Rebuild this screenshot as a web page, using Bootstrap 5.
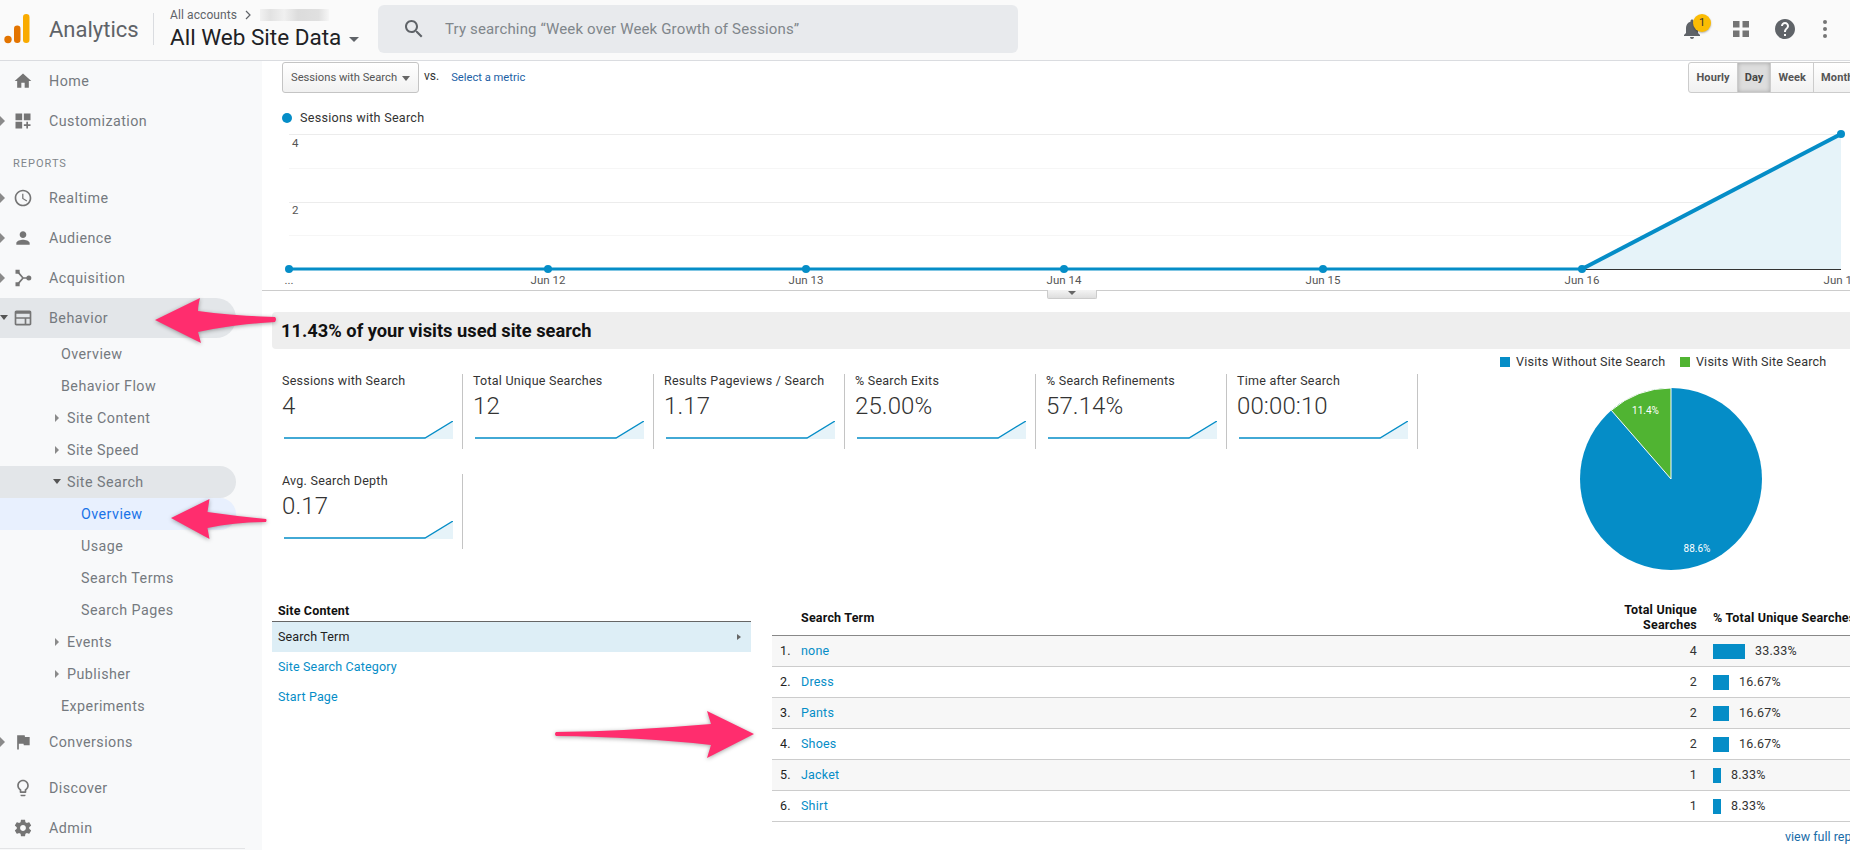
<!DOCTYPE html>
<html lang="en">
<head>
<meta charset="utf-8">
<title>Analytics</title>
<link href="https://cdn.jsdelivr.net/npm/bootstrap@5.3.0/dist/css/bootstrap.min.css" rel="stylesheet">
<style>
html,body{height:100%;overflow:hidden;background:#fff}
body{font-family:Roboto,"Liberation Sans",sans-serif;font-size:13px;color:#333}
.ga-app{position:relative;width:1850px;height:850px;overflow:hidden}
.ga-top{height:61px;background:#fafafa;border-bottom:1px solid #dadce0;padding-bottom:2px}
.ga-logo{margin-left:4px;flex:none}
.ga-brand{font-size:22px;color:#5f6368;margin-left:19px;width:90px}
.ga-vr{width:1px;height:32px;background:#dadce0;margin:0 16px 0 14px}
.ga-acct{width:208px;padding-top:2px}
.ga-crumb{font-size:12px;line-height:14px;color:#5f6368;height:15px;margin-top:-3px;letter-spacing:.1px}
.ga-blur{width:69px;height:12px;margin-left:8px;background:linear-gradient(90deg,#f1f1f1,#e2e2e2 15%,#f0f0f0 35%,#dcdcdc 55%,#e0e0e0 85%,#f6f6f6)}
.ga-view{font-size:22.5px;line-height:26px;color:#202124;margin-top:2px;white-space:nowrap}
.ga-caret{display:inline-block;width:0;height:0;border:5px solid transparent;border-top-color:#5f6368;border-bottom:0;margin-left:8px;vertical-align:middle}
.ga-search{width:640px;height:48px;background:#e8eaed;border-radius:6px;color:#80868b;font-size:15px;letter-spacing:.15px}
.ga-search svg{margin:0 19px 0 24px}
.ga-actions{margin-left:auto}
.ga-ico{fill:#5f6368;flex:none}
.ga-bell{width:24px;height:24px}
.ga-badge{position:absolute;right:-7px;top:-3px;width:18px;height:18px;border-radius:50%;background:#fbbc04;color:#333;font-size:11px;line-height:18px;text-align:center;box-shadow:0 1px 2px rgba(0,0,0,.3)}
.ga-grid{margin-left:29px;flex:none;fill:#757575}
.ga-help{margin-left:24px}
.ga-more{margin:0 22px 0 25px;fill:#757575}
.ga-side{width:262px;height:789px;background:#f8f9fa;flex:none;position:relative;font-size:14.3px;letter-spacing:.45px;color:#757a7f}
.ga-side::after{content:"";position:absolute;left:0;bottom:1px;width:245px;height:1px;background:#e3e4e6}
.ga-row{height:40px;padding:1px 0 0 49px;position:relative;display:flex;align-items:center;width:236px;border-radius:0 20px 20px 0}
.ga-row>svg{position:absolute;left:13px;top:10px;fill:#757575}
.ga-arrow{position:absolute;left:0;top:50%;margin-top:-5px;width:0;height:0;border:5px solid transparent;border-left-color:#8a8a8a;border-right:0}
.ga-sub{height:32px;display:flex;align-items:center;position:relative;width:236px;border-radius:0 16px 16px 0;padding:1px 0 0 61px}
.ga-sub.lv2{padding-left:67px}
.ga-sub.lv3{padding-left:81px}
.ga-sub .ga-arrow{left:55px;margin-top:-4px;border-width:4px;border-right:0}
.ga-row .ga-arrow.ga-down,.ga-sub .ga-arrow.ga-down{border:0;border-left:4px solid transparent;border-right:4px solid transparent;border-top:5px solid #555;margin-top:-3px}
.ga-sub .ga-arrow.ga-down{left:53px}
.ga-on{background:#e3e6e9}
.ga-sel{background:#e8f0fe;color:#1a73e8}
.ga-label{height:37px;padding:15px 0 0 13px;font-size:11px;letter-spacing:1px;line-height:16px;color:#80868b}
.ga-gap{height:6px}
.ga-main{width:1588px;height:789px;overflow:hidden;flex:none;position:relative}
.ga-tools{height:31px;padding:1px 0 0 20px;margin-right:-11.5px}
.ga-select.btn{width:137px;height:31px;padding:2px 8px 0;font-size:11.2px;color:#555;background:linear-gradient(#fff,#f1f1f1);border:1px solid #c4c4c4;border-radius:3px}
.ga-select i{width:0;height:0;border:4px solid transparent;border-top:5px solid #666;border-bottom:0}
.ga-vs{font-size:12px;color:#333;margin:-2px 12px 0 5px}
.ga-metric{font-size:11.2px;color:#1c5fa5;text-decoration:none;padding-top:2px}
.ga-time .btn{height:31px;padding:0 7px;font-size:11px;font-weight:700;color:#555;background:linear-gradient(#fff,#f1f1f1);border:1px solid #ccc;line-height:29px;letter-spacing:.1px;border-radius:3px}
.ga-time .btn.active{background:#ddd;box-shadow:inset 0 0 4px rgba(0,0,0,.25);color:#444;border-color:#ccc}
.ga-legend{height:24px;margin-top:14px;padding-left:20px;color:#333;font-size:12.6px;letter-spacing:.25px}
.ga-dot{width:10px;height:10px;border-radius:50%;background:#058dc7;margin-right:8px}
.ga-chart{display:block;margin-top:-2px;border-bottom:1px solid #ccc;font-family:Roboto,"Liberation Sans",sans-serif}
.ga-chartwrap{position:relative}
.ga-handle{position:absolute;left:785px;bottom:-8px;width:50px;height:9px;border:1px solid #ccc;border-top:0;background:linear-gradient(#f4f4f4,#dedede);border-radius:0 0 2px 2px}
.ga-handle i{position:absolute;left:20px;top:1px;width:0;height:0;border:4px solid transparent;border-top:4px solid #666;border-bottom:0}
.ga-head{height:37px;margin:21px 0 0 10px;padding-left:9px;background:#eee;border-radius:4px 0 0 4px;font-size:18.3px;font-weight:700;color:#111;line-height:38px}
.ga-stats{height:251px}
.ga-cells{width:1156px;flex:none;padding:25px 0 0 10px;align-content:flex-start;row-gap:25px}
.ga-cell{width:191px;height:75px;padding-left:10px;border-right:1px solid #c4c4c4;color:#333}
.ga-cell-t{font-size:12.5px;line-height:13px;letter-spacing:.25px;white-space:nowrap}
.ga-cell-v{font-size:24px;line-height:28px;font-weight:300;margin-top:5px;color:#333;letter-spacing:.1px}
.ga-cell svg{display:block;margin:1px 0 0 2px}
.ga-pie{padding:6px 0 0 82px;width:432px;flex:none}
.ga-pl{font-size:12.6px;line-height:13px;letter-spacing:.2px;color:#333;white-space:nowrap}
.ga-sw{width:10px;height:10px;margin-right:6px;flex:none}
.ga-sw-a{background:#058dc7}
.ga-sw-b{background:#50b432;margin-left:14.5px}
.ga-piesvg{display:block;margin:19px 0 0 79px;font-family:Roboto,"Liberation Sans",sans-serif}
.ga-tables{padding-left:10px}
.ga-left{width:479px;margin-right:21px;padding-top:2px;flex:none;font-size:12.5px;letter-spacing:.15px}
.ga-left-h{height:20px;line-height:17px;padding-left:6px;font-weight:700;color:#111;border-bottom:1px solid #666}
.ga-left-a{height:30px;background:#ddeef6;padding:0 10px 0 6px;color:#222}
.ga-left-a i{width:0;height:0;border:3.5px solid transparent;border-left:4px solid #666;border-right:0}
.ga-left a{display:block;text-decoration:none;color:#058dc7;padding-left:6px;height:30px;line-height:30px}
.ga-right{width:1078px;flex:none;overflow:hidden;font-size:12.5px;letter-spacing:.2px}
.ga-tbl.table{table-layout:fixed;margin:0;width:1078px;--bs-table-bg:transparent;--bs-table-color:#333}
.ga-tbl th{height:35px;padding:0;border-bottom:1px solid #888;font-weight:700;color:#111;line-height:15px;vertical-align:middle;background:none}
.ga-tbl td{height:31px;padding:1px 0 0;border-bottom:1px solid #ccc;vertical-align:middle}
.ga-tbl tbody tr:nth-child(odd) td{background:#f7f7f7}
.ga-tbl a{color:#058dc7;text-decoration:none}
.ga-c1{width:29px}
.ga-c3{width:100px}
.ga-c4{width:153px}
.ga-n{padding-left:8px!important;color:#222}
.ga-r{text-align:right}
.ga-tbl th.ga-p,.ga-tbl td.ga-p{padding-left:16px;white-space:nowrap;letter-spacing:.2px}
.ga-bar{display:inline-block;height:15px;background:#058dc7;margin-right:10px;vertical-align:middle}
.ga-b1{width:32px}.ga-b2{width:16px}.ga-b3{width:8px}
.ga-full{margin:7px 0 0 1013px;white-space:nowrap;line-height:16px;font-size:12.5px;letter-spacing:0}
.ga-full a{color:#1a6ca8;text-decoration:none}
.ga-arrows{position:absolute;left:0;top:0;pointer-events:none}
.ga-arrows path{fill:#ff2d6e;filter:drop-shadow(0 1px 2px rgba(0,0,0,.35))}
</style>
</head>
<body>
<div class="ga-app">
  <header class="ga-top d-flex align-items-center">
    <svg class="ga-logo" width="26" height="58" viewBox="4 0 26 58"><circle cx="8" cy="39.5" r="3.7" fill="#e37400"/><rect x="14" y="25.5" width="6.5" height="17.5" rx="3.2" fill="#e37400"/><rect x="23" y="14" width="6.5" height="29" rx="3.2" fill="#f9ab00"/></svg>
    <div class="ga-brand">Analytics</div>
    <div class="ga-vr"></div>
    <div class="ga-acct">
      <div class="ga-crumb d-flex align-items-center">All accounts&nbsp;
        <svg width="8" height="12" viewBox="0 0 8 12" class="ms-1"><path d="M2 2l4 4-4 4" fill="none" stroke="#5f6368" stroke-width="1.2"/></svg>
        <span class="ga-blur"></span></div>
      <div class="ga-view">All Web Site Data<span class="ga-caret"></span></div>
    </div>
    <div class="ga-search d-flex align-items-center">
      <svg width="24" height="24" viewBox="0 0 24 24" class="ga-ico"><path d="M15.5 14h-.79l-.28-.27C15.41 12.59 16 11.11 16 9.5 16 5.91 13.09 3 9.5 3S3 5.91 3 9.5 5.91 16 9.5 16c1.61 0 3.09-.59 4.23-1.57l.27.28v.79l5 4.99L20.49 19l-4.99-5zm-6 0C7.01 14 5 11.99 5 9.5S7.01 5 9.5 5 14 7.01 14 9.5 11.99 14 9.5 14z"/></svg>
      <span>Try searching “Week over Week Growth of Sessions”</span>
    </div>
    <div class="ga-actions d-flex align-items-center">
      <div class="position-relative ga-bell">
        <svg width="24" height="24" viewBox="0 0 24 24" class="ga-ico"><path d="M12 22c1.1 0 2-.9 2-2h-4c0 1.1.9 2 2 2zm6-6v-5c0-3.07-1.63-5.64-4.5-6.32V4c0-.83-.67-1.5-1.5-1.5s-1.5.67-1.5 1.5v.68C7.64 5.36 6 7.92 6 11v5l-2 2v1h16v-1l-2-2z"/></svg>
        <span class="ga-badge">1</span>
      </div>
      <svg width="16" height="16" viewBox="0 0 16 16" class="ga-grid"><rect width="6.5" height="6.5"/><rect x="9.500" width="6.5" height="6.5"/><rect y="9.500" width="6.5" height="6.5"/><rect x="9.500" y="9.500" width="6.5" height="6.5"/></svg>
      <svg width="24" height="24" viewBox="0 0 24 24" class="ga-ico ga-help"><path d="M12 2C6.48 2 2 6.48 2 12s4.48 10 10 10 10-4.48 10-10S17.52 2 12 2zm1 17h-2v-2h2v2zm2.07-7.75l-.9.92C13.45 12.9 13 13.5 13 15h-2v-.5c0-1.1.45-2.1 1.17-2.83l1.24-1.26c.37-.36.59-.86.59-1.41 0-1.1-.9-2-2-2s-2 .9-2 2H8c0-2.21 1.79-4 4-4s4 1.79 4 4c0 .88-.36 1.68-.93 2.25z"/></svg>
      <svg width="6" height="20" viewBox="0 0 6 20" class="ga-more"><circle cx="3" cy="3" r="2"/><circle cx="3" cy="10" r="2"/><circle cx="3" cy="17" r="2"/></svg>
    </div>
  </header>
  <div class="d-flex">
    <nav class="ga-side">
      <div class="ga-row"><svg width="20" height="20" viewBox="0 0 24 24"><path d="M10 20v-6h4v6h5v-8h3L12 3 2 12h3v8z"/></svg>Home</div>
      <div class="ga-row"><i class="ga-arrow"></i><svg width="20" height="20" viewBox="0 0 24 24"><path d="M3 3h8v8H3zM13 3h8v8h-8zM3 13h8v8H3zM18 13h-2v3h-3v2h3v3h2v-3h3v-2h-3z"/></svg>Customization</div>
      <div class="ga-label">REPORTS</div>
      <div class="ga-row"><i class="ga-arrow"></i><svg width="20" height="20" viewBox="0 0 24 24"><path d="M11.99 2C6.47 2 2 6.48 2 12s4.47 10 9.99 10C17.52 22 22 17.52 22 12S17.52 2 11.99 2zM12 20c-4.42 0-8-3.58-8-8s3.58-8 8-8 8 3.58 8 8-3.58 8-8 8zM12.5 7H11v6l5.25 3.15.75-1.23-4.5-2.67z"/></svg>Realtime</div>
      <div class="ga-row"><i class="ga-arrow"></i><svg width="20" height="20" viewBox="0 0 24 24"><path d="M12 12c2.21 0 4-1.79 4-4s-1.79-4-4-4-4 1.79-4 4 1.79 4 4 4zm0 2c-2.67 0-8 1.34-8 4v2h16v-2c0-2.66-5.33-4-8-4z"/></svg>Audience</div>
      <div class="ga-row"><i class="ga-arrow"></i><svg width="20" height="20" viewBox="0 0 24 24"><path d="M3 2h5v5H3zM3 17h5v5H3z"/><path d="M6 5l6 7-6 7M12 12h7" fill="none" stroke="#757575" stroke-width="2"/><circle cx="19" cy="12" r="3"/></svg>Acquisition</div>
      <div class="ga-row ga-on"><i class="ga-arrow ga-down"></i><svg width="20" height="20" viewBox="0 0 24 24"><path d="M20 3H4c-1.1 0-2 .9-2 2v14c0 1.1.9 2 2 2h16c1.1 0 2-.9 2-2V5c0-1.1-.9-2-2-2zM4 19v-6h10v6H4zm12 0v-6h4v6h-4zm4-8H4V7h16v4z"/></svg>Behavior</div>
      <div class="ga-sub">Overview</div>
      <div class="ga-sub">Behavior Flow</div>
      <div class="ga-sub lv2"><i class="ga-arrow"></i>Site Content</div>
      <div class="ga-sub lv2"><i class="ga-arrow"></i>Site Speed</div>
      <div class="ga-sub lv2 ga-on"><i class="ga-arrow ga-down"></i>Site Search</div>
      <div class="ga-sub lv3 ga-sel">Overview</div>
      <div class="ga-sub lv3">Usage</div>
      <div class="ga-sub lv3">Search Terms</div>
      <div class="ga-sub lv3">Search Pages</div>
      <div class="ga-sub lv2"><i class="ga-arrow"></i>Events</div>
      <div class="ga-sub lv2"><i class="ga-arrow"></i>Publisher</div>
      <div class="ga-sub">Experiments</div>
      <div class="ga-row"><i class="ga-arrow"></i><svg width="20" height="20" viewBox="0 0 24 24"><path d="M14.4 6L14 4H5v17h2v-7h5.6l.4 2h7V6z"/></svg>Conversions</div>
      <div class="ga-gap"></div>
      <div class="ga-row"><svg width="20" height="20" viewBox="0 0 24 24"><path d="M9 21c0 .55.45 1 1 1h4c.55 0 1-.45 1-1v-1H9v1zm3-19C8.14 2 5 5.14 5 9c0 2.38 1.19 4.47 3 5.74V17c0 .55.45 1 1 1h6c.55 0 1-.45 1-1v-2.26c1.81-1.27 3-3.36 3-5.74 0-3.86-3.14-7-7-7zm2.85 11.1l-.85.6V16h-4v-2.3l-.85-.6C7.8 12.16 7 10.63 7 9c0-2.76 2.24-5 5-5s5 2.24 5 5c0 1.63-.8 3.16-2.15 4.1z"/></svg>Discover</div>
      <div class="ga-row"><svg width="20" height="20" viewBox="0 0 24 24"><path d="M19.43 12.98c.04-.32.07-.64.07-.98s-.03-.66-.07-.98l2.11-1.65c.19-.15.24-.42.12-.64l-2-3.46c-.12-.22-.39-.3-.61-.22l-2.49 1c-.52-.4-1.08-.73-1.69-.98l-.38-2.65C14.46 2.18 14.25 2 14 2h-4c-.25 0-.46.18-.49.42l-.38 2.65c-.61.25-1.17.59-1.69.98l-2.49-1c-.23-.09-.49 0-.61.22l-2 3.46c-.13.22-.07.49.12.64l2.11 1.65c-.04.32-.07.65-.07.98s.03.66.07.98l-2.11 1.65c-.19.15-.24.42-.12.64l2 3.46c.12.22.39.3.61.22l2.49-1c.52.4 1.08.73 1.69.98l.38 2.65c.03.24.24.42.49.42h4c.25 0 .46-.18.49-.42l.38-2.65c.61-.25 1.17-.59 1.69-.98l2.49 1c.23.09.49 0 .61-.22l2-3.46c.12-.22.07-.49-.12-.64l-2.11-1.65zM12 15.5c-1.93 0-3.5-1.57-3.5-3.5s1.57-3.5 3.5-3.5 3.5 1.57 3.5 3.5-1.57 3.5-3.5 3.5z"/></svg>Admin</div>
    </nav>
    <main class="ga-main">
      <div class="ga-tools d-flex align-items-center">
        <button type="button" class="btn ga-select d-flex align-items-center justify-content-between">Sessions with Search<i></i></button>
        <span class="ga-vs">vs.</span>
        <a class="ga-metric" href="#">Select a metric</a>
        <div class="btn-group ga-time ms-auto">
          <button type="button" class="btn">Hourly</button>
          <button type="button" class="btn active">Day</button>
          <button type="button" class="btn">Week</button>
          <button type="button" class="btn">Month</button>
        </div>
      </div>
      <div class="ga-legend d-flex align-items-center"><span class="ga-dot"></span>Sessions with Search</div>
      <div class="ga-chartwrap">
        <svg class="ga-chart" width="1588" height="163" viewBox="262 128 1588 162" font-size="11.5" fill="#555">
          <path d="M289 134.500H1841M289 202.500H1841" stroke="#ececec"/>
          <path d="M289 168.500H1841M289 235.500H1841" stroke="#f6f6f6"/>
          <text x="292" y="147">4</text><text x="292" y="214">2</text>
          <polygon points="1582,269 1841,134 1841,269" fill="#e6f3f9"/>
          <path d="M289 269.500H1841" stroke="#333"/>
          <path d="M289 269H1582" fill="none" stroke="#058dc7" stroke-width="3"/>
          <path d="M1582 269L1841 134" fill="none" stroke="#058dc7" stroke-width="4"/>
          <g fill="#058dc7"><circle cx="289" cy="269" r="4"/><circle cx="548" cy="269" r="4"/><circle cx="806" cy="269" r="4"/><circle cx="1064" cy="269" r="4"/><circle cx="1323" cy="269" r="4"/><circle cx="1582" cy="269" r="4"/><circle cx="1841" cy="134" r="4"/></g>
          <g text-anchor="middle"><text x="289" y="284">...</text><text x="548" y="284">Jun 12</text><text x="806" y="284">Jun 13</text><text x="1064" y="284">Jun 14</text><text x="1323" y="284">Jun 15</text><text x="1582" y="284">Jun 16</text><text x="1841" y="284">Jun 17</text></g>
        </svg>
        <div class="ga-handle"><i></i></div>
      </div>
      <div class="ga-head">11.43% of your visits used site search</div>
      <div class="ga-stats d-flex">
        <div class="ga-cells d-flex flex-wrap">
          <div class="ga-cell"><div class="ga-cell-t">Sessions with Search</div><div class="ga-cell-v">4</div><svg width="169" height="19" viewBox="0 0 169 19"><polygon points="141,17 169,0 169,18 141,18" fill="#e6f3f9"/><polyline points="0,17 141,17 169,0" fill="none" stroke="#058dc7" stroke-width="1.300"/></svg></div>
          <div class="ga-cell"><div class="ga-cell-t">Total Unique Searches</div><div class="ga-cell-v">12</div><svg width="169" height="19" viewBox="0 0 169 19"><polygon points="141,17 169,0 169,18 141,18" fill="#e6f3f9"/><polyline points="0,17 141,17 169,0" fill="none" stroke="#058dc7" stroke-width="1.300"/></svg></div>
          <div class="ga-cell"><div class="ga-cell-t">Results Pageviews / Search</div><div class="ga-cell-v">1.17</div><svg width="169" height="19" viewBox="0 0 169 19"><polygon points="141,17 169,0 169,18 141,18" fill="#e6f3f9"/><polyline points="0,17 141,17 169,0" fill="none" stroke="#058dc7" stroke-width="1.300"/></svg></div>
          <div class="ga-cell"><div class="ga-cell-t">% Search Exits</div><div class="ga-cell-v">25.00%</div><svg width="169" height="19" viewBox="0 0 169 19"><polygon points="141,17 169,0 169,18 141,18" fill="#e6f3f9"/><polyline points="0,17 141,17 169,0" fill="none" stroke="#058dc7" stroke-width="1.300"/></svg></div>
          <div class="ga-cell"><div class="ga-cell-t">% Search Refinements</div><div class="ga-cell-v">57.14%</div><svg width="169" height="19" viewBox="0 0 169 19"><polygon points="141,17 169,0 169,18 141,18" fill="#e6f3f9"/><polyline points="0,17 141,17 169,0" fill="none" stroke="#058dc7" stroke-width="1.300"/></svg></div>
          <div class="ga-cell"><div class="ga-cell-t">Time after Search</div><div class="ga-cell-v">00:00:10</div><svg width="169" height="19" viewBox="0 0 169 19"><polygon points="141,17 169,0 169,18 141,18" fill="#e6f3f9"/><polyline points="0,17 141,17 169,0" fill="none" stroke="#058dc7" stroke-width="1.300"/></svg></div>
          <div class="ga-cell"><div class="ga-cell-t">Avg. Search Depth</div><div class="ga-cell-v">0.17</div><svg width="169" height="19" viewBox="0 0 169 19"><polygon points="141,17 169,0 169,18 141,18" fill="#e6f3f9"/><polyline points="0,17 141,17 169,0" fill="none" stroke="#058dc7" stroke-width="1.300"/></svg></div>
        </div>
        <div class="ga-pie">
          <div class="ga-pl d-flex align-items-center"><span class="ga-sw ga-sw-a"></span>Visits Without Site Search<span class="ga-sw ga-sw-b"></span>Visits With Site Search</div>
          <svg class="ga-piesvg" width="184" height="184" viewBox="-92 -92 184 184" font-size="10" text-anchor="middle">
            <circle r="91" fill="#058dc7"/>
            <path d="M0 0L-59.700-68.700A91 91 0 0 1 0-91Z" fill="#50b432" stroke="#fff" stroke-width="1"/>
            <text x="-25.500" y="-65" fill="#fff">11.4%</text>
            <text x="26" y="73" fill="#fff">88.6%</text>
          </svg>
        </div>
      </div>
      <div class="ga-tables d-flex">
        <div class="ga-left">
          <div class="ga-left-h">Site Content</div>
          <div class="ga-left-a d-flex align-items-center justify-content-between">Search Term<i></i></div>
          <a href="#">Site Search Category</a>
          <a href="#">Start Page</a>
        </div>
        <div class="ga-right">
          <table class="table ga-tbl">
            <thead><tr><th class="ga-c1"></th><th>Search Term</th><th class="ga-r ga-c3">Total Unique Searches</th><th class="ga-p ga-c4">% Total Unique Searches</th></tr></thead>
            <tbody>
              <tr><td class="ga-n">1.</td><td><a href="#">none</a></td><td class="ga-r">4</td><td class="ga-p"><span class="ga-bar ga-b1"></span>33.33%</td></tr>
              <tr><td class="ga-n">2.</td><td><a href="#">Dress</a></td><td class="ga-r">2</td><td class="ga-p"><span class="ga-bar ga-b2"></span>16.67%</td></tr>
              <tr><td class="ga-n">3.</td><td><a href="#">Pants</a></td><td class="ga-r">2</td><td class="ga-p"><span class="ga-bar ga-b2"></span>16.67%</td></tr>
              <tr><td class="ga-n">4.</td><td><a href="#">Shoes</a></td><td class="ga-r">2</td><td class="ga-p"><span class="ga-bar ga-b2"></span>16.67%</td></tr>
              <tr><td class="ga-n">5.</td><td><a href="#">Jacket</a></td><td class="ga-r">1</td><td class="ga-p"><span class="ga-bar ga-b3"></span>8.33%</td></tr>
              <tr><td class="ga-n">6.</td><td><a href="#">Shirt</a></td><td class="ga-r">1</td><td class="ga-p"><span class="ga-bar ga-b3"></span>8.33%</td></tr>
            </tbody>
          </table>
          <div class="ga-full"><a href="#">view full report</a></div>
        </div>
      </div>
    </main>
  </div>
  <svg class="ga-arrows" width="1850" height="850" viewBox="0 0 1850 850">
    <path d="M155 320L200 298Q198 306 198 311Q235 316 275 317Q277 319 275 322Q235 324 198 332L201 343Z"/>
    <path d="M171 518L209.500 499L207.500 512Q235 516 266 519Q267 520 266 522Q235 522 207.500 528L209.500 539Z"/>
    <path d="M754 734L707 711L711 724Q630 731 556 732Q554 734 556 736Q640 737 711 745L707 758Z"/>
  </svg>
</div>
</body>
</html>
